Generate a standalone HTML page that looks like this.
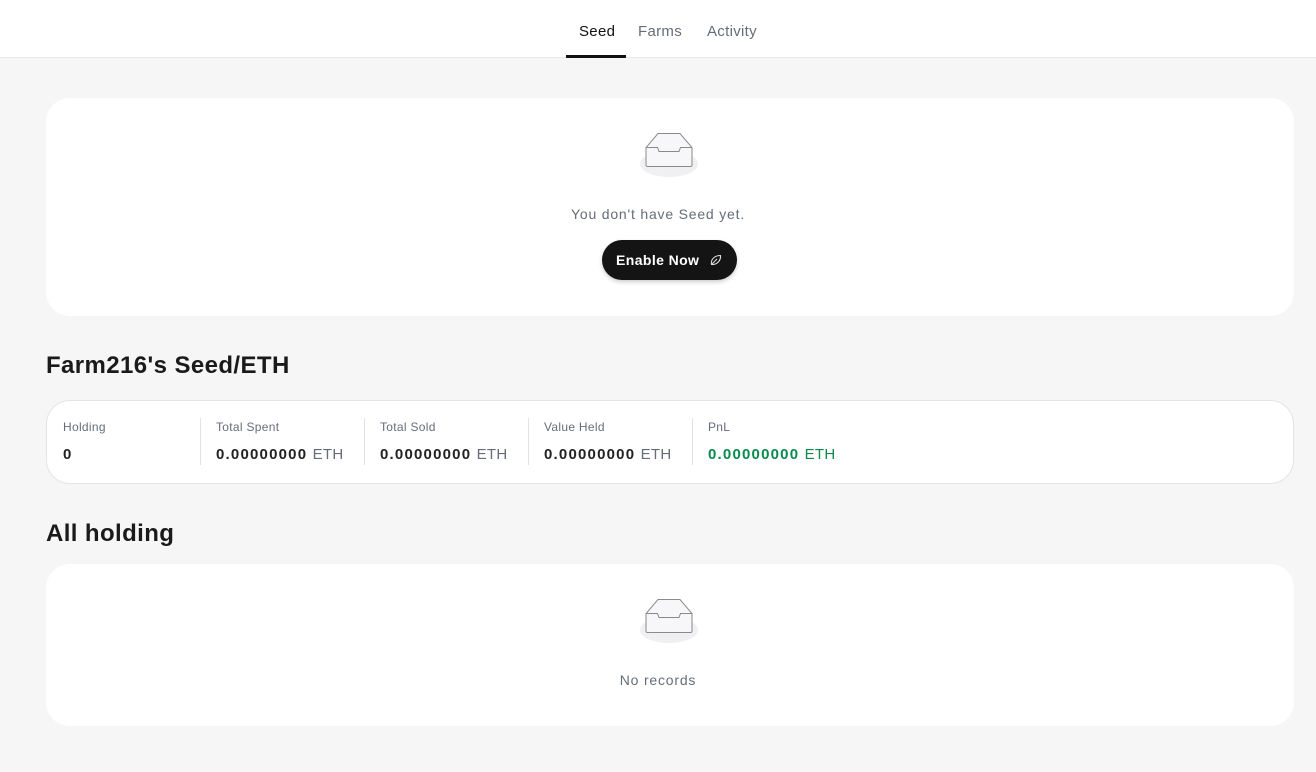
<!DOCTYPE html>
<html><head><meta charset="utf-8"><style>
*{box-sizing:border-box;margin:0;padding:0}
body{width:1316px;height:772px;background:#f6f6f6;font-family:"Liberation Sans",sans-serif;position:relative;overflow:hidden;color:#1a1a1a}
.hdr{position:absolute;left:0;top:0;width:1316px;height:58px;background:#fff;border-bottom:1px solid #e8e8e8}
.tab{position:absolute;top:23px;font-size:15px;color:#666c7a;letter-spacing:0.3px}
.card{position:absolute;left:46px;width:1248px;background:#fff;border-radius:24px}
.ico{position:absolute;left:637px}
.msg{position:absolute;width:1316px;left:0;text-align:center;font-size:14px;color:#666c7a;letter-spacing:0.8px}
.btn{position:absolute;left:602px;top:240px;width:135px;height:40px;border-radius:20px;background:#141414;color:#fff;font-weight:bold;font-size:14px;line-height:40px;padding-left:14px;letter-spacing:0.4px;box-shadow:0 2px 4px rgba(0,0,0,.2)}
h2{position:absolute;left:46px;font-size:24px;font-weight:bold;color:#1a1a1a;letter-spacing:0.4px}
.lab{position:absolute;top:420px;font-size:12px;color:#666c7a;letter-spacing:0.3px}
.val{position:absolute;top:446px;font-size:15px;font-weight:bold;color:#222;letter-spacing:1.2px}
.val span{font-weight:normal;color:#666c7a;letter-spacing:0.3px}
.div{position:absolute;top:418px;width:1px;height:47px;background:#e2e2e2}
</style></head><body>
<div class="hdr">
<div class="tab" style="left:579px;color:#111">Seed</div>
<div class="tab" style="left:638px">Farms</div>
<div class="tab" style="left:707px">Activity</div>
<div style="position:absolute;left:566px;top:55px;width:60px;height:3px;background:#111"></div>
</div>
<div class="card" style="top:98px;height:218px"></div>
<svg class="ico" style="top:130px" width="64" height="50" viewBox="0 0 64 50"><ellipse cx="32" cy="34" rx="29" ry="13" fill="#f0f0f2"/><path d="M21 3.5H43L55 17.5V35a1.5 1.5 0 0 1-1.5 1.5h-43A1.5 1.5 0 0 1 9 35V17.5Z" fill="#f7f7f9" stroke="#8a8a8a" stroke-width="1"/><path d="M9 17.5H20.5L22 21.5H42L43.5 17.5H55" fill="none" stroke="#8a8a8a" stroke-width="1"/></svg>
<div class="msg" style="top:206px;left:0px">You don't have Seed yet.</div>
<div class="btn">Enable Now <svg style="position:absolute;left:107px;top:13px" width="14" height="14" viewBox="0 0 14 14"><path d="M2.5 11.5C1.5 7 5 2.5 11.5 2.5 12 7 8.5 12 2.5 11.5ZM2.5 11.5L8 6" fill="none" stroke="#ddd" stroke-width="1.1"/></svg></div>
<h2 style="top:352px">Farm216's Seed/ETH</h2>
<div class="card" style="top:400px;height:84px;border:1px solid #e4e4e4"></div>
<div class="lab" style="left:63px">Holding</div><div class="val" style="left:63px">0</div>
<div class="div" style="left:200px"></div>
<div class="lab" style="left:216px">Total Spent</div><div class="val" style="left:216px">0.00000000 <span>ETH</span></div>
<div class="div" style="left:364px"></div>
<div class="lab" style="left:380px">Total Sold</div><div class="val" style="left:380px">0.00000000 <span>ETH</span></div>
<div class="div" style="left:528px"></div>
<div class="lab" style="left:544px">Value Held</div><div class="val" style="left:544px">0.00000000 <span>ETH</span></div>
<div class="div" style="left:692px"></div>
<div class="lab" style="left:708px">PnL</div><div class="val" style="left:708px;color:#0b8a4e">0.00000000 <span style="color:#0b8a4e">ETH</span></div>
<h2 style="top:520px">All holding</h2>
<div class="card" style="top:564px;height:162px"></div>
<svg class="ico" style="top:596px" width="64" height="50" viewBox="0 0 64 50"><ellipse cx="32" cy="34" rx="29" ry="13" fill="#f0f0f2"/><path d="M21 3.5H43L55 17.5V35a1.5 1.5 0 0 1-1.5 1.5h-43A1.5 1.5 0 0 1 9 35V17.5Z" fill="#f7f7f9" stroke="#8a8a8a" stroke-width="1"/><path d="M9 17.5H20.5L22 21.5H42L43.5 17.5H55" fill="none" stroke="#8a8a8a" stroke-width="1"/></svg>
<div class="msg" style="top:672px;left:0px">No records</div>
</body></html>
